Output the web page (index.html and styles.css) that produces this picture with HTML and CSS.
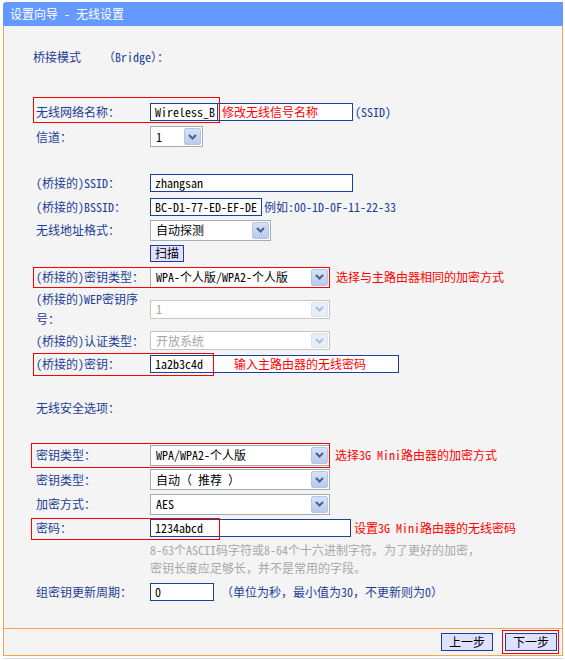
FILE: index.html
```html
<!DOCTYPE html>
<html lang="zh-CN">
<head>
<meta charset="utf-8">
<title>设置向导 - 无线设置</title>
<link rel="stylesheet" href="styles.css">
</head>
<body>
<div class="wiz">
  <div class="hd">设置向导 - 无线设置</div>
  <div class="bd">
    <div class="row r-bridge"><span>桥接模式</span><span class="bridge">（Bridge）：</span></div>

    <div class="row r-name">
      <div class="lbl">无线网络名称：</div>
      <div class="inp w203"><span class="seg">Wireless_B</span><span class="note">修改无线信号名称</span></div>
      <span class="aside">(SSID)</span>
      <i class="mark m-name"></i>
    </div>

    <div class="row r-chan">
      <div class="lbl">信道：</div>
      <div class="sel w53"><span class="sv">1</span><span class="dd"><svg width="9" height="6" viewBox="0 0 9 6"><polyline points="1,1 4.5,4.5 8,1" /></svg></span></div>
    </div>

    <div class="row r-ssid">
      <div class="lbl">(桥接的)SSID：</div>
      <div class="inp w203"><span>zhangsan</span></div>
    </div>

    <div class="row r-bssid">
      <div class="lbl">(桥接的)BSSID：</div>
      <div class="inp w112"><span>BC-D1-77-ED-EF-DE</span></div>
      <span class="aside">例如:00-1D-0F-11-22-33</span>
    </div>

    <div class="row r-fmt">
      <div class="lbl">无线地址格式：</div>
      <div class="sel w121"><span class="sv">自动探测</span><span class="dd"><svg width="9" height="6" viewBox="0 0 9 6"><polyline points="1,1 4.5,4.5 8,1" /></svg></span></div>
    </div>

    <div class="row r-scan">
      <div class="lbl"></div>
      <span class="btn scan">扫描</span>
    </div>

    <div class="row r-ktype">
      <div class="lbl">(桥接的)密钥类型：</div>
      <div class="sel w180"><span class="sv">WPA-个人版/WPA2-个人版</span><span class="dd"><svg width="9" height="6" viewBox="0 0 9 6"><polyline points="1,1 4.5,4.5 8,1" /></svg></span></div>
      <span class="note out">选择与主路由器相同的加密方式</span>
      <i class="mark m-ktype"></i>
    </div>

    <div class="row r-wep">
      <div class="lbl two">(桥接的)WEP密钥序号：</div>
      <div class="sel dis w180"><span class="sv">1</span><span class="dd"><svg width="9" height="6" viewBox="0 0 9 6"><polyline points="1,1 4.5,4.5 8,1" /></svg></span></div>
    </div>

    <div class="row r-auth">
      <div class="lbl">(桥接的)认证类型：</div>
      <div class="sel dis w180"><span class="sv">开放系统</span><span class="dd"><svg width="9" height="6" viewBox="0 0 9 6"><polyline points="1,1 4.5,4.5 8,1" /></svg></span></div>
    </div>

    <div class="row r-key">
      <div class="lbl">(桥接的)密钥：</div>
      <div class="inp w249"><span class="seg2">1a2b3c4d</span><span class="note">输入主路由器的无线密码</span></div>
      <i class="mark m-key"></i>
    </div>

    <div class="row r-sec">
      <div class="lbl wide">无线安全选项：</div>
    </div>

    <div class="row r-k2">
      <div class="lbl">密钥类型：</div>
      <div class="sel w180"><span class="sv">WPA/WPA2-个人版</span><span class="dd"><svg width="9" height="6" viewBox="0 0 9 6"><polyline points="1,1 4.5,4.5 8,1" /></svg></span></div>
      <span class="note out2">选择3G Mini路由器的加密方式</span>
      <i class="mark m-k2"></i>
    </div>

    <div class="row r-k3">
      <div class="lbl">密钥类型：</div>
      <div class="sel w180"><span class="sv">自动（ 推荐 ）</span><span class="dd"><svg width="9" height="6" viewBox="0 0 9 6"><polyline points="1,1 4.5,4.5 8,1" /></svg></span></div>
    </div>

    <div class="row r-enc">
      <div class="lbl">加密方式：</div>
      <div class="sel w180"><span class="sv">AES</span><span class="dd"><svg width="9" height="6" viewBox="0 0 9 6"><polyline points="1,1 4.5,4.5 8,1" /></svg></span></div>
    </div>

    <div class="row r-pw">
      <div class="lbl">密码：</div>
      <div class="inp w201"><span>1234abcd</span></div>
      <span class="note out3">设置3G Mini路由器的无线密码</span>
      <i class="mark m-pw"></i>
    </div>

    <div class="help">
      <div>8-63个ASCII码字符或8-64个十六进制字符。为了更好的加密，</div>
      <div>密钥长度应足够长，并不是常用的字段。</div>
    </div>

    <div class="row r-grp">
      <div class="lbl">组密钥更新周期：</div>
      <div class="inp w64"><span>0</span></div>
      <span class="aside unit">（单位为秒，最小值为30，不更新则为0）</span>
    </div>
  </div>
  <div class="ft">
    <span class="btn nav">上一步</span>
    <span class="hl"><span class="btn nav">下一步</span></span>
  </div>
</div>
<div class="shadow"></div>
</body>
</html>
```

FILE: styles.css
```css
* { box-sizing: border-box; }
html, body { margin: 0; padding: 0; background: #fff; }
body {
  font-family: "Noto Sans Mono CJK SC", "Noto Sans CJK SC", "Liberation Mono", monospace;
  font-size: 12px;
  color: #1d3e96;
  line-height: 16px;
}
.wiz { width: 560px; margin: 2px 0 0 3px; }
.hd {
  height: 24px;
  background: #6699ff;
  color: #fff;
  padding-left: 7px;
  display: flex;
  align-items: center;
  border-top-left-radius: 3px;
}
.bd {
  background: #f4f4f4;
  border-left: 1px solid #f5a64c;
  border-right: 1px solid #f5a64c;
  border-bottom: 1px solid #f5a64c;
  padding-bottom: 25px;
  display: flex;
  flex-direction: column;
}
.row {
  position: relative;
  display: flex;
  align-items: center;
  padding-left: 32px;
  height: 24px;
}
.lbl { width: 114px; flex: none; }
.lbl.two { line-height: 20px; width: 112px; margin-right: 2px; }
.lbl.wide { width: auto; }

.r-bridge { margin-top: 19px; padding-left: 29px; }
.bridge { margin-left: 22px; }
.r-name { margin-top: 31px; }
.r-chan { height: 25px; }
.r-ssid { margin-top: 21px; height: 25px; }
.r-bssid { height: 24px; }
.r-fmt { height: 22px; }
.r-scan { height: 24px; }
.r-ktype { height: 24px; }
.r-wep { height: 40px; }
.r-auth { height: 23px; }
.r-key { height: 23px; }
.r-sec { margin-top: 21px; height: 24px; }
.r-k2 { margin-top: 23px; height: 24px; }
.r-k3 { height: 25px; }
.r-enc { height: 24px; }
.r-pw { height: 23px; }
.r-grp { margin-top: 3px; height: 23px; }

.inp {
  height: 18px;
  border: 1px solid #1b3f9d;
  background: #fff;
  color: #000;
  display: flex;
  align-items: center;
  padding-left: 4px;
  flex: none;
  white-space: nowrap;
}
.w64 { width: 64px; }
.w112 { width: 112px; }
.w201 { width: 201px; }
.w203 { width: 203px; }
.w249 { width: 249px; }
.w53 { width: 53px; }
.w121 { width: 121px; }
.w180 { width: 180px; }
.inp .seg {
  display: flex;
  align-items: center;
  height: 100%;
  width: 63px;
  border-right: 1px solid #1b3f9d;
}
.inp .seg2 { width: 75px; }
.note { color: #ff0000; white-space: nowrap; }
.inp .note { margin-left: 4px; }
.note.out { margin-left: 6px; }
.note.out2 { margin-left: 5px; }
.note.out3 { margin-left: 3px; }
.aside { margin-left: 2px; white-space: nowrap; }
.aside.unit { margin-left: 7px; }

.sel {
  height: 21px;
  border: 1px solid #a5acb2;
  background: #fff;
  color: #000;
  display: flex;
  align-items: center;
  padding-left: 5px;
  flex: none;
}
.r-wep .sel, .r-auth .sel { height: 19px; }
.sv { flex: 1; white-space: nowrap; }
.dd {
  width: 17px;
  height: 17px;
  margin-right: 1px;
  border: 1px solid #b4c6e6;
  border-radius: 2px;
  background: linear-gradient(#d6e2f7, #b7cbef);
  display: flex;
  align-items: center;
  justify-content: center;
  flex: none;
}
.r-wep .dd, .r-auth .dd { height: 15px; }
.dd svg polyline { fill: none; stroke: #4d6185; stroke-width: 2; }
.sel.dis { border-color: #c9c7bd; color: #a6a6a6; }
.sel.dis .dd { background: #e6eefb; border-color: #d8e2f3; }
.sel.dis .dd svg polyline { stroke: #b2bdd2; }

.btn {
  display: inline-flex;
  align-items: center;
  justify-content: center;
  background: #e0e0ff;
  border: 1px solid #1b3f9d;
  color: #000;
}
.scan { width: 34px; height: 17px; }

.mark {
  position: absolute;
  border: 1px solid #ff0000;
  pointer-events: none;
}
.m-name { left: 29px; top: -3px; width: 187px; height: 26px; }
.m-ktype { left: 29px; top: 2px; width: 297px; height: 21px; }
.m-key { left: 29px; top: 1px; width: 181px; height: 23px; }
.m-k2 { left: 27px; top: 0; width: 299px; height: 25px; }
.m-pw { left: 27px; top: 2px; width: 189px; height: 22px; }

.help {
  padding-left: 146px;
  margin-top: 2px;
  color: #a8a8a8;
  line-height: 18px;
}

.ft {
  height: 27px;
  background: #f4f4f4;
  border-left: 1px solid #f5a64c;
  border-right: 1px solid #f5a64c;
  border-bottom: 1px solid #f5a64c;
  display: flex;
  justify-content: flex-end;
  align-items: center;
  padding-right: 3px;
  gap: 9px;
}
.nav { width: 52px; height: 18px; }
.hl {
  display: inline-flex;
  border: 1px solid #ff0000;
  padding: 2px 1px 2px 2px;
}
.shadow {
  width: 560px;
  height: 1px;
  margin: 2px 0 0 3px;
  background: #dcdcdc;
}
```
